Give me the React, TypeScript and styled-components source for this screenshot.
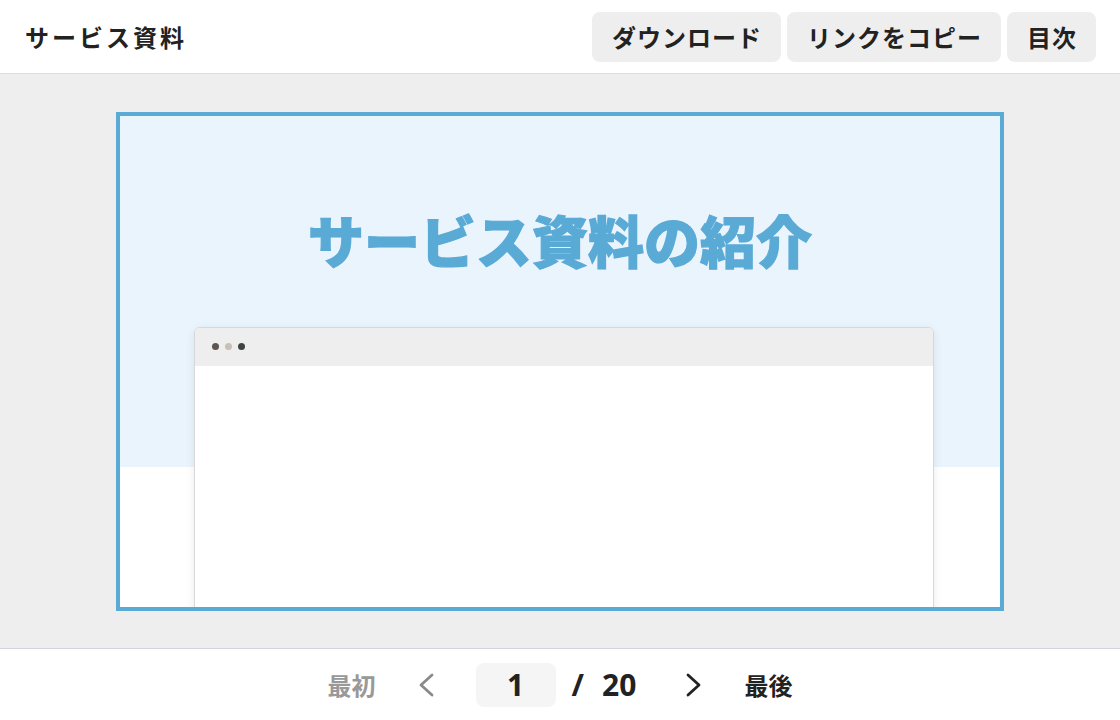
import React from 'react'
import styled, { createGlobalStyle } from 'styled-components'

const GlobalStyle = createGlobalStyle`
  html, body {
    margin: 0;
    padding: 0;
    height: 100%;
  }
  body {
    font-family: 'Noto Sans CJK JP', 'Noto Sans', sans-serif;
    color: #222222;
    background: #ffffff;
  }
  #root {
    height: 100%;
  }
`

const Chevron: React.FC<{ dir: 'left' | 'right'; color: string }> = ({ dir, color }) => (
  <svg width="16" height="24" viewBox="0 0 16 24" fill="none">
    <path
      d={dir === 'left' ? 'M14 2 L3 12 L14 22' : 'M2 2 L13 12 L2 22'}
      stroke={color}
      strokeWidth="2.8"
      strokeLinecap="round"
      strokeLinejoin="round"
    />
  </svg>
)

const App: React.FC = () => {
  return (
    <Page>
      <GlobalStyle />
      <Header>
        <Title>サービス資料</Title>
        <Actions>
          <ActionButton>ダウンロード</ActionButton>
          <ActionButton>リンクをコピー</ActionButton>
          <ActionButton>目次</ActionButton>
        </Actions>
      </Header>
      <Stage>
        <Slide>
          <SlideHero>
            <SlideTitle>サービス資料の紹介</SlideTitle>
          </SlideHero>
          <BrowserMock>
            <BrowserBar>
              <Dot color="#5e5550" />
              <Dot color="#c9bfb5" />
              <Dot color="#3e4540" />
            </BrowserBar>
            <BrowserBody />
          </BrowserMock>
        </Slide>
      </Stage>
      <Footer>
        <PageLink muted>最初</PageLink>
        <ArrowButton before={42} after={42}>
          <Chevron dir="left" color="#8a8a8a" />
        </ArrowButton>
        <PageBox>1</PageBox>
        <PageTotal>
          <span>/</span>
          <span>20</span>
        </PageTotal>
        <ArrowButton before={50} after={42}>
          <Chevron dir="right" color="#222222" />
        </ArrowButton>
        <PageLink>最後</PageLink>
      </Footer>
    </Page>
  )
}

const Page = styled.div`
  display: flex;
  flex-direction: column;
  height: 720px;
  width: 1120px;
  overflow: hidden;
`

const Header = styled.header`
  display: flex;
  align-items: center;
  justify-content: space-between;
  height: 73px;
  padding: 0 24px 0 25px;
  border-bottom: 1px solid #dddddd;
  box-sizing: content-box;
  background: #ffffff;
`

const Title = styled.h1`
  margin: 0;
  font-size: 24px;
  font-weight: 700;
  letter-spacing: 3px;
  color: #222222;
`

const Actions = styled.div`
  display: flex;
  gap: 6px;
`

const ActionButton = styled.button`
  height: 50px;
  padding: 0 19px 0 20px;
  border: none;
  border-radius: 8px;
  background: #eeeeee;
  font-family: 'Noto Sans CJK JP', 'Noto Sans', sans-serif;
  font-size: 24px;
  font-weight: 700;
  letter-spacing: 1px;
  color: #222222;
  cursor: pointer;
`

const Stage = styled.main`
  flex: 1;
  display: flex;
  align-items: center;
  justify-content: center;
  background: #eeeeee;
  border-bottom: 1px solid #d4d4da;
`

const Slide = styled.div`
  position: relative;
  width: 880px;
  height: 491px;
  border: 4px solid #5aaad6;
  background: #ffffff;
  overflow: hidden;
`

const SlideHero = styled.div`
  height: 351px;
  background: #eaf4fd;
  display: flex;
  justify-content: center;
  padding-top: 87px;
  box-sizing: border-box;
`

const SlideTitle = styled.h2`
  margin: 0;
  font-family: 'Noto Sans CJK JP Black', 'Noto Sans CJK JP', sans-serif;
  font-size: 56px;
  font-weight: 900;
  line-height: 72px;
  color: #5aaad6;
  -webkit-text-stroke: 1.2px #5aaad6;
`

const BrowserMock = styled.div`
  position: absolute;
  left: 74px;
  top: 211px;
  width: 738px;
  height: 320px;
  border: 1px solid #d8d8dc;
  border-radius: 6px 6px 0 0;
  background: #ffffff;
  box-shadow: 0 2px 10px rgba(0, 0, 0, 0.08);
  overflow: hidden;
`

const BrowserBar = styled.div`
  display: flex;
  align-items: center;
  gap: 6px;
  height: 38px;
  padding-left: 17px;
  background: #eeeeee;
`

const Dot = styled.span<{ color: string }>`
  width: 7px;
  height: 7px;
  border-radius: 50%;
  background: ${(p) => p.color};
`

const BrowserBody = styled.div`
  height: 100%;
  background: #ffffff;
`

const Footer = styled.footer`
  height: 71px;
  display: flex;
  align-items: center;
  justify-content: center;
  background: #ffffff;
`

const PageLink = styled.span<{ muted?: boolean }>`
  font-size: 24px;
  font-weight: 700;
  color: ${(p) => (p.muted ? '#999999' : '#222222')};
  cursor: pointer;
`

const ArrowButton = styled.span<{ before: number; after: number }>`
  display: flex;
  align-items: center;
  justify-content: center;
  margin: 0 ${(p) => p.after}px 0 ${(p) => p.before}px;
  cursor: pointer;
`

const PageBox = styled.div`
  width: 80px;
  height: 44px;
  display: flex;
  align-items: center;
  justify-content: center;
  border-radius: 8px;
  background: #f5f5f5;
  font-family: 'Noto Sans', 'Noto Sans CJK JP', sans-serif;
  font-size: 30px;
  font-weight: 700;
  color: #222222;
`

const PageTotal = styled.span`
  display: flex;
  align-items: center;
  gap: 18px;
  margin-left: 16px;
  font-family: 'Noto Sans', 'Noto Sans CJK JP', sans-serif;
  font-size: 30px;
  font-weight: 700;
  color: #222222;
`

export default App
